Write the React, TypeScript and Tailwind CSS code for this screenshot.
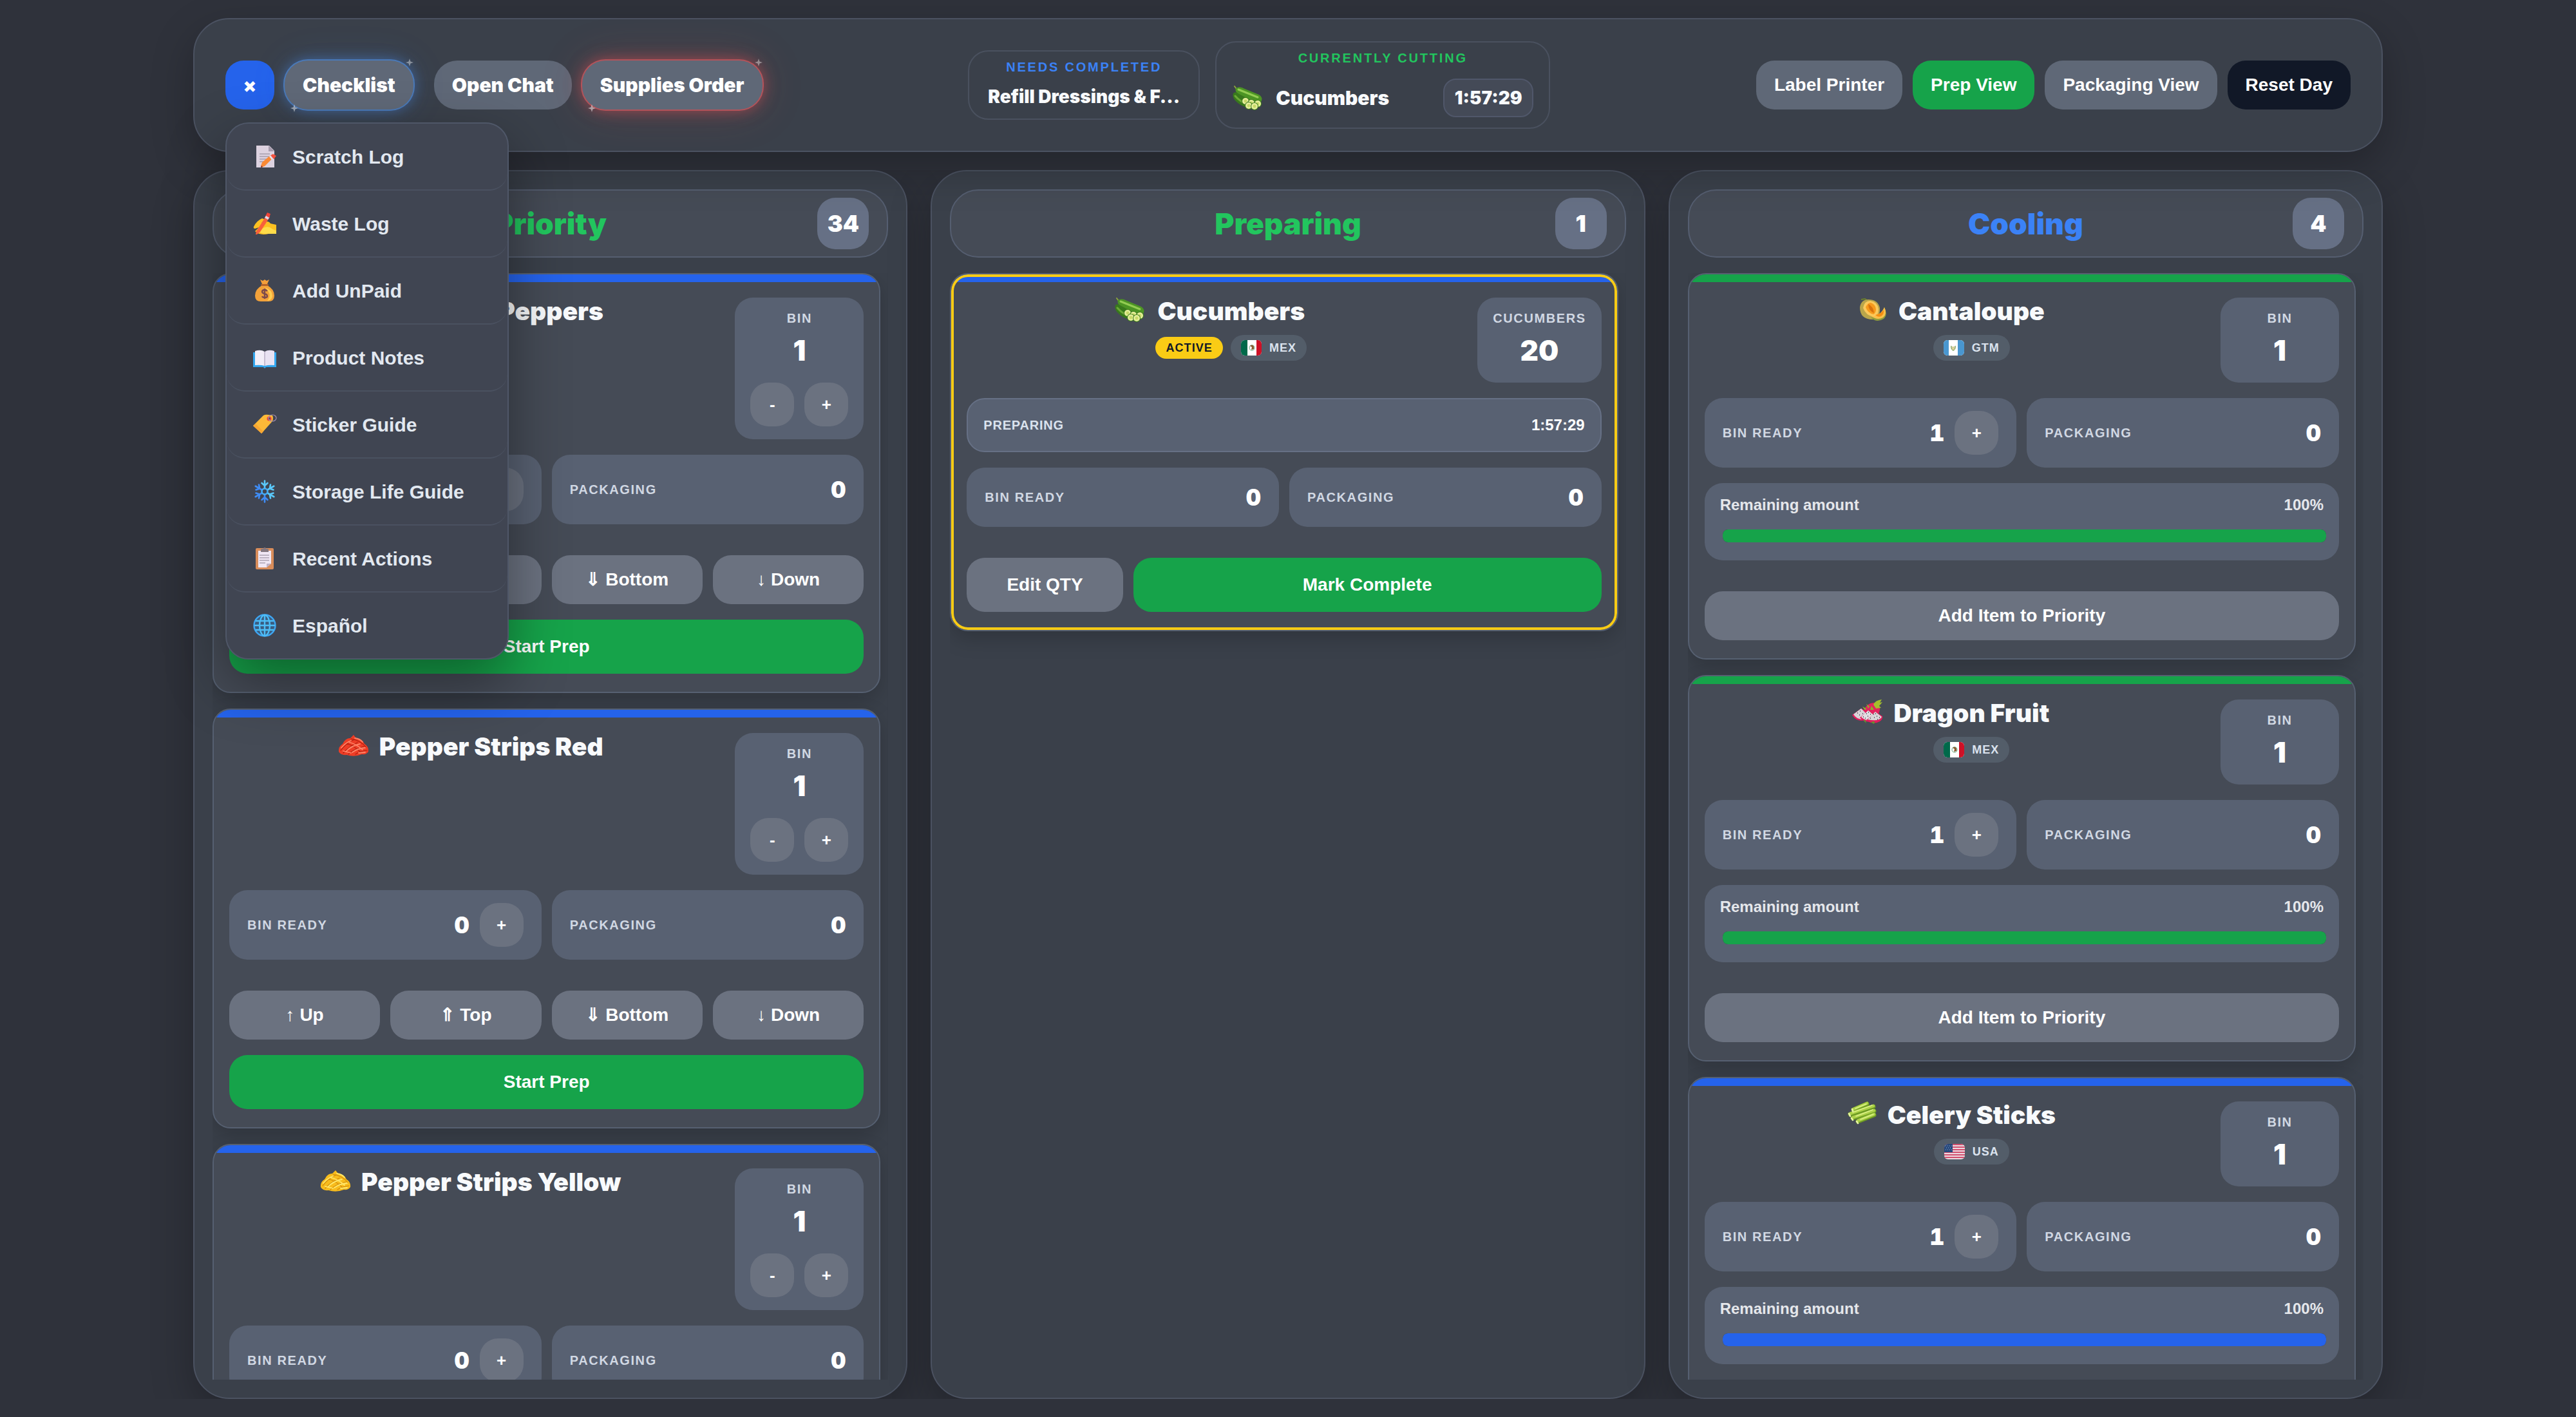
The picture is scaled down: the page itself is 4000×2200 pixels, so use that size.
import React, { useState } from 'react';

type FoodName = 'peppers' | 'red' | 'yellow' | 'cucumber' | 'cantaloupe' | 'dragon' | 'celery';
type Country = 'MEX' | 'GTM' | 'USA';

interface CardData {
  id: string;
  title: string;
  food: FoodName;
  ready: number;
  packaging: number;
  amount: number;
}

interface CoolingData extends CardData {
  country: Country;
  remaining: number;
  accent: 'green' | 'blue';
}

const priorityItems: CardData[] = [
  { id: 'p1', title: 'Chopped Peppers', food: 'peppers', ready: 0, packaging: 0, amount: 1 },
  { id: 'p2', title: 'Pepper Strips Red', food: 'red', ready: 0, packaging: 0, amount: 1 },
  { id: 'p3', title: 'Pepper Strips Yellow', food: 'yellow', ready: 0, packaging: 0, amount: 1 },
];

const coolingItems: CoolingData[] = [
  { id: 'c1', title: 'Cantaloupe', food: 'cantaloupe', ready: 1, packaging: 0, amount: 1, country: 'GTM', remaining: 100, accent: 'green' },
  { id: 'c2', title: 'Dragon Fruit', food: 'dragon', ready: 1, packaging: 0, amount: 1, country: 'MEX', remaining: 100, accent: 'green' },
  { id: 'c3', title: 'Celery Sticks', food: 'celery', ready: 1, packaging: 0, amount: 1, country: 'USA', remaining: 100, accent: 'blue' },
];

/* ---------- Food pictures ---------- */

const StripPile: React.FC<{ dark: string; mid: string; light: string }> = ({ dark, mid, light }) => (
  <g fill="none" strokeLinecap="round">
    <path d="M1 29 Q0 21 7 17 Q11 8 19 8 L24 3 L28 8 Q38 9 41 17 Q48 21 47 29 Q44 34 37 33 Q25 38 13 34 Q4 35 1 29Z" fill={mid} />
    <path d="M4 27 Q14 14 26 10 M8 31 Q16 22 30 15 M16 33 Q24 25 40 21 M27 33 Q34 28 45 27 M12 16 Q26 20 36 31 M20 9 Q36 12 43 22" stroke={dark} strokeWidth="1.2" />
    <path d="M5 23 Q12 15 20 12 M12 29 Q20 20 34 17 M22 30 Q30 24 42 23 M16 14 Q28 17 38 26 M26 8 Q34 9 38 14 M8 28 L20 31 M32 31 L42 30" stroke={light} strokeWidth="1.8" />
  </g>
);

const FoodIcon: React.FC<{ name: FoodName }> = ({ name }) => (
  <svg viewBox="0 0 48 38" className="h-[38px] w-12 shrink-0" aria-hidden="true">
    {name === 'red' && <StripPile dark="#b3200f" mid="#ee3d26" light="#ff8468" />}
    {name === 'peppers' && <StripPile dark="#27691d" mid="#5aa32f" light="#e2311f" />}
    {name === 'yellow' && <StripPile dark="#d08a0a" mid="#f8bc1c" light="#ffe668" />}
    {name === 'cucumber' && (
      <g>
        <path d="M4 1 L7 5" stroke="#8aa53c" strokeWidth="2" strokeLinecap="round" />
        <path d="M6 4 Q12 0 20 5 L42 14 Q49 19 45 25 Q40 29 32 25 L10 13 Q4 9 6 4Z" fill="#4c9424" />
        <path d="M10 6 L40 18" stroke="#92cc52" strokeWidth="3" strokeLinecap="round" />
        <path d="M2 12 Q5 8 11 13 L30 23 L24 34 Q12 31 5 23 Q0 17 2 12Z" fill="#38781c" />
        <path d="M5 16 Q12 24 20 27" stroke="#6aa836" strokeWidth="3" fill="none" strokeLinecap="round" />
        {[[21, 24], [30, 27], [40, 28], [26, 31], [35, 32]].map(([cx, cy]) => (
          <g key={`${cx}-${cy}`}>
            <circle cx={cx} cy={cy} r="6" fill="#3c7a1c" />
            <circle cx={cx} cy={cy} r="5" fill="#e4ee9a" />
            <circle cx={cx} cy={cy} r="2.4" fill="#c6da66" />
          </g>
        ))}
      </g>
    )}
    {name === 'cantaloupe' && (
      <g>
        <path d="M6 3 L12 2 L16 5" stroke="#6b7f2c" strokeWidth="2" fill="none" />
        <path d="M4 15 Q6 3 17 3 Q32 3 35 16 Q36 31 24 34 Q4 34 4 15Z" fill="#b9a54a" />
        <path d="M9 16 Q11 5 20 5 Q32 7 33 18 Q33 28 26 30 Q13 28 9 16Z" fill="#fbc95c" />
        <path d="M13 15 Q16 8 21 8 Q29 11 29 19 Q28 25 25 26 Q16 24 13 15Z" fill="#f79a1c" />
        <path d="M17 10 Q25 14 26 24 Q17 20 17 10Z" fill="#d8720e" />
        <path d="M21 31 Q37 31 42 15 Q48 27 41 33 Q30 40 21 31Z" fill="#8f9c3c" />
        <path d="M22 29 Q36 29 42 15 Q47 25 40 31 Q31 36 22 29Z" fill="#fbc04a" />
        <path d="M28 27 Q37 25 41 19 Q42 26 37 29 Q32 31 28 27Z" fill="#f58f12" />
      </g>
    )}
    {name === 'dragon' && (
      <g>
        <path d="M19 16 Q22 6 34 5 Q46 8 42 20 Q36 29 24 26Z" fill="#e3235e" />
        <path d="M33 8 Q36 1 46 0 L43 5 L47 4 L42 10 L45 13 L37 14Z" fill="#a3bf2c" />
        <path d="M22 7 L27 11 L25 14Z M16 11 L22 14 L20 17Z M30 10 L34 16 L28 16Z" fill="#8fae2a" />
        <path d="M0 24 Q8 38 26 30 L32 22 L14 14Z" fill="#e21d5c" />
        <path d="M2 23 L14 14 L20 20 L22 30 Q8 33 2 23Z" fill="#d9d4d8" />
        <path d="M12 28 Q19 37 34 34 L38 26 L26 17Z" fill="#e21d5c" />
        <path d="M14 27 L25 17 L33 24 L32 32 Q20 34 14 27Z" fill="#e2dee2" />
        <path d="M22 32 Q32 40 43 34 Q48 31 47 26 L37 19Z" fill="#e21d5c" />
        <path d="M24 31 L36 19 L46 27 Q42 35 24 31Z" fill="#d9d4d8" />
        <path d="M8 21h1M12 18h1M11 24h1M16 22h1M17 27h1M22 22h1M25 20h1M24 26h1M28 23h1M28 29h1M33 23h1M36 22h1M34 28h1M38 26h1M39 31h1M42 28h1M20 29h1" stroke="#3a3440" strokeWidth="1.4" />
        <path d="M18 33 L22 37 L20 31Z M29 35 L34 38 L35 34Z" fill="#5fa02a" />
      </g>
    )}
    {name === 'celery' && (
      <g strokeLinecap="round" fill="none">
        <path d="M11 13 L32 4 M6 20 L42 8 M10 26 L43 15 M18 31 L43 21" stroke="#6c9a22" strokeWidth="7" />
        <path d="M11 12 L32 3 M6 19 L42 7 M10 25 L43 14 M18 30 L43 20" stroke="#acd148" strokeWidth="4.6" />
        <path d="M14 11 L31 4 M10 17 L40 6 M15 23 L41 13 M22 28 L42 20" stroke="#dcf088" strokeWidth="1.6" />
        <path d="M9 12 L10 15 M4 19 L6 23 M8 26 L10 29 M16 31 L18 34" stroke="#e8f5a4" strokeWidth="2.6" />
      </g>
    )}
  </svg>
);

const Flag: React.FC<{ country: Country }> = ({ country }) => (
  <svg viewBox="0 0 32 24" className="h-6 w-8 shrink-0 rounded-md" aria-hidden="true">
    {country === 'MEX' && (
      <g>
        <rect width="32" height="24" fill="#fff" />
        <rect width="10" height="24" fill="#00694a" />
        <rect x="24" width="8" height="24" fill="#ce1126" />
        <circle cx="17" cy="12" r="4" fill="none" stroke="#8fbfa0" strokeWidth="1.4" />
        <path d="M14 9 Q18 6 20 10 L20 14 L16 15 L17 11Z" fill="#8a5a30" />
      </g>
    )}
    {country === 'GTM' && (
      <g>
        <rect width="32" height="24" fill="#fff" />
        <rect width="8" height="24" fill="#4997d0" />
        <rect x="22" width="10" height="24" fill="#4997d0" />
        <path d="M12 9 Q11 14 15 16 M18 9 Q19 14 15 16" stroke="#7da05a" strokeWidth="1.4" fill="none" />
        <rect x="13" y="10" width="4" height="5" fill="#d9cf9a" />
      </g>
    )}
    {country === 'USA' && (
      <g>
        <rect width="32" height="24" fill="#ecd9e0" />
        {[0, 4, 8, 12, 16, 20].map(y => (
          <rect key={y} y={y} width="32" height="2" fill="#d2506f" />
        ))}
        <rect width="13" height="13" fill="#27497c" />
        <path d="M2 3h1M5 3h1M8 3h1M11 3h1M3 6h1M6 6h1M9 6h1M2 9h1M5 9h1M8 9h1M11 9h1" stroke="#9db3d1" />
      </g>
    )}
  </svg>
);

/* ---------- Menu pictures ---------- */

const NoteIcon = () => (
  <g>
    <path d="M5 1h20l8 8v26H5z" fill="#ddd2e0" />
    <path d="M24 1l9 9h-9z" fill="#a79cad" />
    <path d="M10 14h16M10 18h16M10 22h12M10 26h7" stroke="#8c8292" strokeWidth="1.2" />
    <path d="M12 33l2-6 13-11 4 4-13 13-5 2z" fill="#fb8a35" />
    <path d="M26 17l5-3 5 3-4 5z" fill="#f4523f" />
    <path d="M25 18l2-2 4 5-2 2z" fill="#e9e2ee" />
    <path d="M12 35l1-3 2 2z" fill="#6d2430" />
  </g>
);

const WritingIcon = () => (
  <g>
    <path d="M1 23 Q5 14 14 10 L19 12 L13 17 Q23 12 27 18 L36 20 V34 H24 Q10 37 3 30 L9 24 L3 26 Q0 26 1 23Z" fill="#fcc021" />
    <path d="M14 26 Q20 22 26 24 Q31 28 36 29 V34 H20 Q12 34 10 31Z" fill="#ffdc4a" />
    <path d="M4 35l1-5 16-25 5 3-15 23-5 4z" fill="#f8603b" />
    <path d="M19 7l3-6 5 2-2 6z" fill="#f04438" />
    <path d="M18 9l2-3 5 3-2 3z" fill="#dfd8e8" />
  </g>
);

const MoneyIcon = () => (
  <g>
    <path d="M11 1l4 2 3-2 3 2 4-2-3 7h-8z" fill="#f59f3a" />
    <path d="M14 10h8Q33 16 33 26Q33 35 24 35H12Q3 35 3 26Q3 16 14 10z" fill="#f3a23a" />
    <path d="M18 13Q30 17 30 27Q29 33 22 34Q31 24 18 13z" fill="#ffce52" />
    <rect x="12" y="8" width="12" height="3" rx="1.5" fill="#b4632a" />
    <path d="M22 19Q20 17 18 17Q14 17 14 20Q14 22 18 23Q22 24 22 27Q22 29 18 29Q15 29 14 27M18 15v16" fill="none" stroke="#7d4a4c" strokeWidth="2.4" />
  </g>
);

const BookIcon = () => (
  <g>
    <path d="M0 10h36v23H20l-2 2-2-2H0z" fill="#32a6ee" />
    <path d="M3 8Q12 5 18 9V31Q11 29 3 30z" fill="#f3eef8" />
    <path d="M33 8Q24 5 18 9V31Q25 29 33 30z" fill="#e9e2f2" />
    <path d="M18 9V31" stroke="#b9aec6" strokeWidth="1.5" />
  </g>
);

const TagIcon = () => (
  <g>
    <path d="M0 20L16 4Q19 2 24 3L30 4Q32 8 30 13L13 32z" fill="#fcb938" />
    <path d="M0 20L13 32L16 29L4 17z" fill="#f7a632" />
    <circle cx="25" cy="9" r="3.6" fill="#f0483c" />
    <circle cx="25" cy="9" r="1.7" fill="#404552" />
    <ellipse cx="30" cy="8" rx="6" ry="5" fill="none" stroke="#a58fb0" strokeWidth="1.2" />
  </g>
);

const SnowIcon = () => (
  <g fill="none" strokeWidth="2.6" strokeLinecap="round">
    {[0, 60, 120, 180, 240, 300].map(angle => (
      <path
        key={angle}
        d="M18 13V1.5M18 9l-4.5-4M18 9l4.5-4"
        stroke={angle >= 180 ? '#3f8cf5' : '#5ac8fa'}
        transform={`rotate(${angle} 18 18)`}
      />
    ))}
    <circle cx="18" cy="18" r="4.5" stroke="#45aef8" />
  </g>
);

const ClipboardIcon = () => (
  <g>
    <rect x="4" y="2" width="28" height="33" rx="2" fill="#d98d5b" />
    <path d="M8 6h20v20l-7 6H8z" fill="#f0e7f4" />
    <path d="M28 26l-7 6v-6z" fill="#bfb2c6" />
    <path d="M10 13h15M10 17h15M10 21h15M10 25h9" stroke="#8c8292" strokeWidth="1.2" />
    <path d="M12 8V4q0-1 2-1h2q0-2 2-2t2 2h2q2 0 2 1v4z" fill="#84777f" />
  </g>
);

const GlobeIcon = () => (
  <g fill="none" stroke="#4dbdf6" strokeWidth="2.4">
    <circle cx="18" cy="18" r="16.5" stroke="#3ea6f2" fill="#3a5c80" />
    <ellipse cx="18" cy="18" rx="8" ry="16" />
    <path d="M18 2v32M2 18h32M4 11h28M4 25h28" />
  </g>
);

const menuItems = [
  { label: 'Scratch Log', Icon: NoteIcon },
  { label: 'Waste Log', Icon: WritingIcon },
  { label: 'Add UnPaid', Icon: MoneyIcon },
  { label: 'Product Notes', Icon: BookIcon },
  { label: 'Sticker Guide', Icon: TagIcon },
  { label: 'Storage Life Guide', Icon: SnowIcon },
  { label: 'Recent Actions', Icon: ClipboardIcon },
  { label: 'Español', Icon: GlobeIcon },
];

/* ---------- Header ---------- */

const Sparkle: React.FC<{ className: string }> = ({ className }) => (
  <svg viewBox="0 0 12 12" className={`absolute h-3 w-3 ${className}`} aria-hidden="true">
    <path d="M6 0 L7.5 4.5 L12 6 L7.5 7.5 L6 12 L4.5 7.5 L0 6 L4.5 4.5Z" fill="#fff" />
  </svg>
);

const GlowButton: React.FC<{ label: string; glow: string }> = ({ label, glow }) => (
  <button className={`relative h-[76px] rounded-[36px] bg-[#5f6877] px-7 font-['Inter'] text-[30px] font-black text-white ${glow}`}>
    {label}
    <Sparkle className="-top-[3px] right-0 opacity-40" />
    <Sparkle className="-bottom-1 left-[9px] opacity-50" />
  </button>
);

const Header: React.FC = () => {
  const [menuOpen, setMenuOpen] = useState(true);

  return (
    <header className="relative z-10 flex items-center justify-between rounded-[56px] border-2 border-[#4b5261] bg-[#3a404a] px-12 py-[34px] shadow-[0_24px_64px_rgba(0,0,0,0.25)]">
      <div className="flex items-center gap-4">
        <div className="relative">
          <button
            onClick={() => setMenuOpen(!menuOpen)}
            aria-label="Toggle menu"
            className="block h-[76px] w-[76px] rounded-[28px] bg-[#2563eb] font-['Inter'] text-[30px] font-black text-white"
          >
            ×
          </button>
          {menuOpen && (
            <nav className="absolute top-full left-0 z-20 mt-5 w-[440px] overflow-hidden rounded-[36px] border-2 border-[#4f5768] bg-[#404552] shadow-[0_36px_90px_rgba(0,0,0,0.4)]">
              {menuItems.map(({ label, Icon }) => (
                <button
                  key={label}
                  className="flex h-[104px] w-full items-center gap-6 rounded-[28px] border-b-2 border-[#4a5160] px-10 text-left text-[30px] font-bold text-[#e2e8f0] last:h-[102px] last:border-b-0"
                >
                  <svg viewBox="-1 0 38 36" className="h-9 w-[38px] shrink-0" aria-hidden="true">
                    <Icon />
                  </svg>
                  {label}
                </button>
              ))}
            </nav>
          )}
        </div>
        <GlowButton
          label="Checklist"
          glow="mr-4 shadow-[0_0_0_2px_#4a79b8,0_0_22px_rgba(73,134,220,0.6),0_0_60px_rgba(59,130,246,0.12)]"
        />
        <button className="h-[76px] rounded-[36px] bg-[#5f6877] px-7 font-['Inter'] text-[30px] font-black text-white">Open Chat</button>
        <GlowButton
          label="Supplies Order"
          glow="shadow-[0_0_0_2px_#b3535a,0_0_24px_rgba(220,80,84,0.65),0_0_70px_rgba(239,68,68,0.18)]"
        />
      </div>

      <div className="flex items-center gap-6">
        <section className="flex h-[108px] w-[360px] flex-col items-center gap-4 rounded-[32px] border-2 border-[#4a515f] px-6 pt-3">
          <h2 className="text-[20px] leading-6 font-bold tracking-[0.14em] text-[#3b82f6]">NEEDS COMPLETED</h2>
          <p className="w-full truncate text-center font-['Inter'] text-[28px] leading-9 font-black text-[#f8fafc]">Refill Dressings &amp; F...</p>
        </section>
        <section className="w-[520px] rounded-[32px] border-2 border-[#4a515f] px-6 pt-3 pb-4">
          <h2 className="text-center text-[20px] leading-6 font-bold tracking-[0.14em] text-[#22c55e]">CURRENTLY CUTTING</h2>
          <div className="mt-5 flex items-center gap-5">
            <FoodIcon name="cucumber" />
            <span className="flex-1 font-['Inter'] text-[30px] font-black text-[#f8fafc]">Cucumbers</span>
            <time className="flex h-[60px] w-[140px] items-center justify-center rounded-[20px] border-2 border-[#50576a] bg-[#444a57] font-['Inter'] text-[28px] font-black text-[#f8fafc]">
              1:57:29
            </time>
          </div>
        </section>
      </div>

      <div className="flex items-center gap-4">
        <button className="h-[76px] rounded-[28px] bg-[#5f6877] px-7 text-[28px] font-bold text-white">Label Printer</button>
        <button className="h-[76px] rounded-[28px] bg-[#16a34a] px-7 text-[28px] font-bold text-white">Prep View</button>
        <button className="h-[76px] rounded-[28px] bg-[#5f6877] px-7 text-[28px] font-bold text-white">Packaging View</button>
        <button className="h-[76px] rounded-[28px] bg-[#111827] px-7 text-[28px] font-bold text-white">Reset Day</button>
      </div>
    </header>
  );
};

/* ---------- Columns ---------- */

interface ColumnProps {
  title: string;
  count: number;
  titleClass: string;
  children: React.ReactNode;
}

const Column: React.FC<ColumnProps> = ({ title, count, titleClass, children }) => (
  <section className="flex min-h-0 flex-col gap-6 rounded-[56px] border-2 border-[#4b5261] bg-[#3a404a] p-7 shadow-[0_24px_64px_rgba(0,0,0,0.25)]">
    <div className="relative flex h-[106px] shrink-0 items-center justify-center rounded-[44px] border-2 border-[#555e70] bg-[#454b56]">
      <h2 className={`font-['Inter'] text-[46px] font-black ${titleClass}`}>{title}</h2>
      <span className="absolute right-7 flex h-20 w-20 items-center justify-center rounded-[28px] bg-[#667085] font-['Inter'] text-[36px] font-black text-white">
        {count}
      </span>
    </div>
    <div className="flex min-h-0 flex-1 flex-col gap-6 overflow-hidden pr-3">{children}</div>
  </section>
);

interface CardProps {
  title: string;
  food: FoodName;
  accent: string;
  country?: Country;
  active?: boolean;
  box: React.ReactNode;
  children: React.ReactNode;
}

const Card: React.FC<CardProps> = ({ title, food, accent, country, active, box, children }) => (
  <article className="relative shrink-0 overflow-hidden rounded-[28px] border-2 border-[#566071] bg-[#454b56] shadow-[0_12px_32px_rgba(0,0,0,0.18)]">
    <div className={`h-3 ${accent}`} />
    <div className="flex flex-col p-6 pb-7">
      <div className="flex items-start gap-9">
        <div className="flex flex-1 items-start justify-center gap-4">
          <FoodIcon name={food} />
          <div className="flex flex-col items-center gap-4">
            <h3 className="font-['Inter'] text-[39px] leading-[42px] font-black whitespace-nowrap text-[#f8fafc]">{title}</h3>
            {country && (
              <div className="flex items-center gap-3">
                {active && (
                  <span className="rounded-full bg-[#facc15] px-4 py-1 text-[18px] leading-[26px] font-bold tracking-[0.06em] text-[#111827]">ACTIVE</span>
                )}
                <span className="flex h-10 items-center gap-3 rounded-full bg-[#535d69] px-4 text-[18px] leading-6 font-bold tracking-[0.06em] text-[#dbe3ee]">
                  <Flag country={country} />
                  {country}
                </span>
              </div>
            )}
          </div>
        </div>
        {box}
      </div>
      {children}
    </div>
    {active && <div className="pointer-events-none absolute inset-0 rounded-[26px] border-4 border-[#facc15]" />}
  </article>
);

const RoundButton: React.FC<{ label: string; name: string }> = ({ label, name }) => (
  <button aria-label={name} className="h-[68px] w-[68px] shrink-0 rounded-[28px] bg-[#6b7280] text-[26px] font-bold text-white">
    {label}
  </button>
);

const AmountBox: React.FC<{ label: string; value: number; editable?: boolean }> = ({ label, value, editable }) => (
  <div className="flex min-w-[184px] flex-col items-center rounded-[28px] bg-[#586172] px-6 py-5">
    <span className="text-[20px] leading-6 font-bold tracking-[0.08em] text-[#d1d8e3]">{label}</span>
    <span className="mt-2 font-['Inter'] text-[44px] leading-[60px] font-black text-white">{value}</span>
    {editable && (
      <div className="mt-5 flex gap-4">
        <RoundButton label="-" name="Decrease amount" />
        <RoundButton label="+" name="Increase amount" />
      </div>
    )}
  </div>
);

const Stat: React.FC<{ label: string; value: number; addable?: boolean }> = ({ label, value, addable }) => (
  <div className="flex flex-1 items-center gap-4 rounded-[28px] bg-[#586172] px-7 py-5">
    <span className="flex-1 text-[20px] leading-6 font-bold tracking-[0.08em] text-[#d1d8e3]">{label}</span>
    <span className="font-['Inter'] text-[36px] leading-[52px] font-black text-white tabular-nums">{value}</span>
    {addable && <RoundButton label="+" name={`Add to ${label.toLowerCase()}`} />}
  </div>
);

const GrayButton: React.FC<{ children: React.ReactNode }> = ({ children }) => (
  <button className="h-[76px] rounded-[28px] bg-[#6b7280] text-[28px] font-bold text-white">{children}</button>
);

const PriorityCard: React.FC<{ item: CardData }> = ({ item }) => (
  <Card title={item.title} food={item.food} accent="bg-[#2563eb]" box={<AmountBox label="BIN" value={item.amount} editable />}>
    <div className="mt-6 flex gap-4">
      <Stat label="BIN READY" value={item.ready} addable />
      <Stat label="PACKAGING" value={item.packaging} />
    </div>
    <div className="mt-12 grid grid-cols-4 gap-4">
      <GrayButton>↑ Up</GrayButton>
      <GrayButton>⇑ Top</GrayButton>
      <GrayButton>⇓ Bottom</GrayButton>
      <GrayButton>↓ Down</GrayButton>
    </div>
    <button className="mt-6 h-[84px] rounded-[28px] bg-[#16a34a] text-[28px] font-bold text-white">Start Prep</button>
  </Card>
);

const PreparingCard: React.FC = () => (
  <Card title="Cucumbers" food="cucumber" accent="bg-[#2563eb]" country="MEX" active box={<AmountBox label="CUCUMBERS" value={20} />}>
    <div className="mt-6 flex h-[84px] items-center justify-between rounded-[28px] border-2 border-[#667085] bg-[#586172] px-6">
      <span className="text-[20px] font-bold tracking-[0.04em] text-[#dbe3ee]">PREPARING</span>
      <time className="text-[24px] font-bold text-white">1:57:29</time>
    </div>
    <div className="mt-6 flex gap-4">
      <Stat label="BIN READY" value={0} />
      <Stat label="PACKAGING" value={0} />
    </div>
    <div className="mt-12 flex gap-4">
      <button className="h-[84px] flex-1 rounded-[28px] bg-[#6b7280] text-[28px] font-bold text-white">Edit QTY</button>
      <button className="h-[84px] flex-3 rounded-[28px] bg-[#16a34a] text-[28px] font-bold text-white">Mark Complete</button>
    </div>
  </Card>
);

const CoolingCard: React.FC<{ item: CoolingData }> = ({ item }) => {
  const accent = item.accent === 'green' ? 'bg-[#16a34a]' : 'bg-[#2563eb]';

  return (
    <Card title={item.title} food={item.food} accent={accent} country={item.country} box={<AmountBox label="BIN" value={item.amount} />}>
      <div className="mt-6 flex gap-4">
        <Stat label="BIN READY" value={item.ready} addable />
        <Stat label="PACKAGING" value={item.packaging} />
      </div>
      <div className="mt-6 rounded-[28px] bg-[#586172] px-6 pt-5 pb-7">
        <div className="flex justify-between text-[24px] leading-7 font-bold text-[#e5e7eb]">
          <span>Remaining amount</span>
          <span>{item.remaining}%</span>
        </div>
        <div role="progressbar" aria-label="Remaining amount" aria-valuenow={item.remaining} className="mt-6 -mr-1 ml-1 h-5 overflow-hidden rounded-lg bg-[#454b56]">
          <div className={`h-full rounded-lg ${accent}`} style={{ width: `${item.remaining}%` }} />
        </div>
      </div>
      <div className="mt-12 grid">
        <GrayButton>Add Item to Priority</GrayButton>
      </div>
    </Card>
  );
};

const App: React.FC = () => (
  <div className="flex h-screen flex-col bg-[#2f323b] px-7 py-7 font-['Liberation_Sans',Arial,sans-serif]">
    <div className="mx-auto flex min-h-0 w-full max-w-[3400px] flex-1 flex-col gap-7">
      <Header />
      <main className="grid min-h-0 flex-1 grid-cols-3 gap-9 overflow-y-clip">
        <Column title="Priority" count={34} titleClass="text-[#22c55e]">
          {priorityItems.map(item => (
            <PriorityCard key={item.id} item={item} />
          ))}
        </Column>
        <Column title="Preparing" count={1} titleClass="text-[#22c55e]">
          <PreparingCard />
        </Column>
        <Column title="Cooling" count={4} titleClass="text-[#3b82f6]">
          {coolingItems.map(item => (
            <CoolingCard key={item.id} item={item} />
          ))}
        </Column>
      </main>
    </div>
  </div>
);

export default App;
